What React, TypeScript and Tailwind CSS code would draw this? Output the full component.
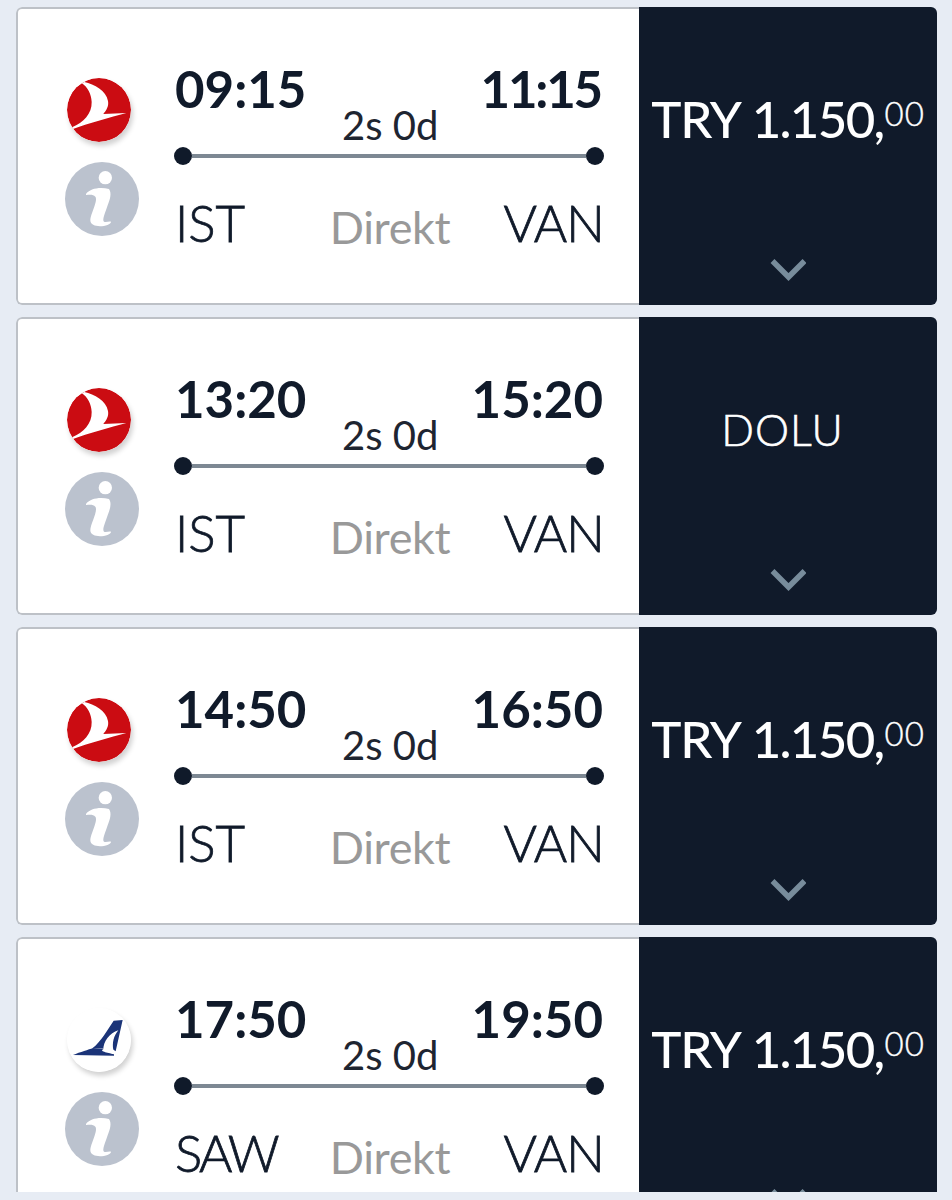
const flights = [
  { airline: "thy", departure: "09:15", arrival: "11:15", from: "IST", to: "VAN", soldOut: false },
  { airline: "thy", departure: "13:20", arrival: "15:20", from: "IST", to: "VAN", soldOut: true },
  { airline: "thy", departure: "14:50", arrival: "16:50", from: "IST", to: "VAN", soldOut: false },
  { airline: "ajet", departure: "17:50", arrival: "19:50", from: "SAW", to: "VAN", soldOut: false },
];

type Flight = (typeof flights)[number];

function ThyLogo() {
  return (
    <svg viewBox="52 53 192 192" className="size-16 rounded-full shadow-[2px_4px_5px_rgba(0,0,0,0.18)]">
      <circle cx="148" cy="149" r="96" fill="#cb0c12" />
      <path
        d="M96 68L104 65C134 72 170 91 175 122C178 138 170 150 161 161L230 158C180 172 120 188 70 206L67 201C102 186 127 160 126 125C125 101 114 80 96 68Z"
        fill="#fff"
      />
    </svg>
  );
}

function AjetLogo() {
  return (
    <svg viewBox="10 0 192 192" className="size-16 rounded-full shadow-[2px_4px_5px_rgba(0,0,0,0.18)]">
      <circle cx="106" cy="96" r="96" fill="#fff" />
      <path d="M86 121C112 100 130 68 150 38L177 36L156 130L146 123Z" fill="#1b3478" />
      <path d="M164 67C150 84 145 105 149 126L119 127C118 100 138 75 164 67Z" fill="#fff" />
      <path d="M28 141C50 132 75 125 88 120L120 124C105 130 130 134 151 139V143Z" fill="#1b3478" />
    </svg>
  );
}

function InfoIcon() {
  return (
    <svg viewBox="46 306 222 222" className="ml-[-2px] mt-5 size-[74px]">
      <circle cx="157" cy="417" r="111" fill="#bbc2ce" />
      <circle cx="167" cy="353" r="20" fill="#fff" />
      <path
        d="M109 402C120 386 150 380 178 387C187 400 181 418 174 436C166 460 157 480 163 485C171 488 178 482 184 485C184 500 122 508 122 481C122 462 146 422 137 410C130 402 120 404 109 405Z"
        fill="#fff"
      />
    </svg>
  );
}

function Route({ flight }: { flight: Flight }) {
  return (
    <div className="mt-[50px] w-[430px] text-[#101a2a]">
      <div className="flex h-[88px]">
        <span className="w-[168px] shrink-0 pl-px text-[51px] font-bold leading-[60px]">{flight.departure}</span>
        <span className="w-24 shrink-0 whitespace-nowrap pt-9 text-[40px] leading-[60px] text-[#1e2531]">2s 0d</span>
        <span
          className={
            flight.arrival === "11:15"
              ? "flex-1 pr-[3px] text-right text-[51px] font-bold leading-[60px] tracking-[-2.2px]"
              : "flex-1 pr-px text-right text-[51px] font-bold leading-[60px]"
          }
        >
          {flight.arrival}
        </span>
      </div>
      <div className="flex items-center">
        <span className="size-[18px] rounded-full bg-[#101a2a]" />
        <span className="h-1 flex-1 bg-[#7d8893]" />
        <span className="size-[18px] rounded-full bg-[#101a2a]" />
      </div>
      <div className="mt-7 flex justify-between">
        <span
          className={
            flight.from === "SAW"
              ? "w-[154px] pl-px text-[51px] font-light leading-[60px] tracking-[-2.8px] [-webkit-text-stroke:0.8px]"
              : "w-[154px] pl-px text-[51px] font-light leading-[60px] [-webkit-text-stroke:0.8px]"
          }
        >
          {flight.from}
        </span>
        <span className="pt-px text-[45px] leading-[66px] tracking-[-0.4px] text-[#999]">Direkt</span>
        <span className="w-[152px] text-right text-[51px] font-light leading-[60px] tracking-[-0.8px] [-webkit-text-stroke:0.8px]">
          {flight.to}
        </span>
      </div>
    </div>
  );
}

function FlightCard({ flight }: { flight: Flight }) {
  return (
    <div className="flex h-[298px] shrink-0 overflow-hidden rounded-md">
      <div className="flex w-[623px] rounded-l-md border-2 border-r-0 border-[#bdc1c7] bg-white">
        <div className="ml-[49px] mt-[69px] w-[107px]">
          {flight.airline === "thy" ? <ThyLogo /> : <AjetLogo />}
          <InfoIcon />
        </div>
        <Route flight={flight} />
      </div>
      <div className="flex flex-1 flex-col items-center justify-between bg-[#101a2a] text-white">
        {flight.soldOut ? (
          <span className="mr-[11px] mt-[83px] text-[43px] font-light leading-[60px] tracking-[1px] [-webkit-text-stroke:0.6px]">
            DOLU
          </span>
        ) : (
          <span className="mt-[82px] flex whitespace-nowrap text-[51px] font-medium leading-[60px]">
            <span className="mr-[11px] tracking-[-1.2px]">TRY</span>
            <span className="tracking-[-1.7px]">1.150,</span>
            <span className="ml-px text-[33px] font-light leading-[48px] tracking-[1px] [-webkit-text-stroke:0.4px]">
              00
            </span>
          </span>
        )}
        <svg viewBox="0 0 36 22" className="mb-6 h-[22px] w-9">
          <path d="M2.5 2L18.5 18L34.5 2" fill="none" stroke="#788c9b" strokeWidth="5.5" />
        </svg>
      </div>
    </div>
  );
}

export default function App() {
  return (
    <div className="h-[1200px] bg-[#e7ecf4] font-['Lato',sans-serif]">
      <div className="flex h-[1192px] flex-col gap-3 overflow-hidden pl-4 pr-[15px] pt-[7px]">
        {flights.map((flight) => (
          <FlightCard key={flight.departure} flight={flight} />
        ))}
      </div>
    </div>
  );
}
